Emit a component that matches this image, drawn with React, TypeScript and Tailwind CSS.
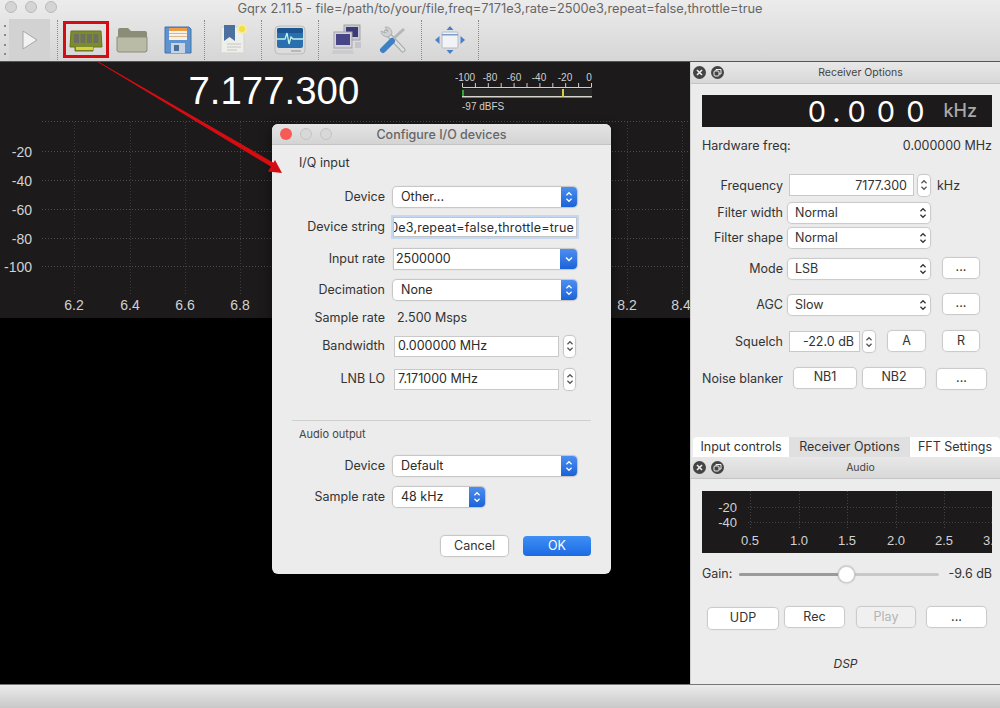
import React from 'react'

const SANS = 'font-["Inter","Liberation_Sans",sans-serif]'

function Stepper({ small }: { small?: boolean }) {
  return (
    <svg width="8" height={small ? 12 : 14} viewBox="0 0 8 14" fill="none" stroke="currentColor" strokeWidth="1.4">
      <path d="M1 5 L4 2 L7 5" />
      <path d="M1 9 L4 12 L7 9" />
    </svg>
  )
}

function BlueSelect({ value, className }: { value: string; className: string }) {
  return (
    <div className={`flex h-5 items-center rounded-[4px] bg-white pl-2 shadow-[0_0_1px_1px_#c4c4c4] ${className}`}>
      <span className="flex-1 truncate text-[#2b2b2b]">{value}</span>
      <span className="flex h-5 w-4 items-center justify-center rounded-r-[4px] bg-gradient-to-b from-[#4c8ff0] to-[#1a62d8] text-white">
        <Stepper small />
      </span>
    </div>
  )
}

function SpinBox({ value }: { value: string }) {
  return (
    <div className="ml-px flex items-center gap-[5px]">
      <div className="flex h-[21px] w-[165px] items-center border border-[#c9c9c9] bg-white pl-[3px] text-[#2b2b2b]">
        {value}
      </div>
      <span className="flex h-[21px] w-[11px] items-center justify-center rounded-[4px] bg-white text-[#555] shadow-[0_0_1px_1px_#c4c4c4]">
        <Stepper small />
      </span>
    </div>
  )
}

function DialogRow({ label, className, children }: { label: string; className: string; children: React.ReactNode }) {
  return (
    <div className={`flex h-5 items-center ${className}`}>
      <span className="w-[113px] text-right text-[#333]">{label}</span>
      <div className="ml-2">{children}</div>
    </div>
  )
}

function ConfigureDialog() {
  return (
    <div className={`absolute left-[272px] top-[124px] h-[450px] w-[339px] overflow-hidden rounded-[6px] bg-[#ececec] text-[12.5px] shadow-[0_4px_14px_rgba(0,0,0,0.45)] ${SANS}`}>
      <div className="relative flex h-[21px] items-center justify-center border-b border-[#c4c4c4] bg-gradient-to-b from-[#e4e4e4] to-[#d4d4d4] pt-[2px]">
        <div className="absolute left-[8px] top-[4px] flex gap-[8px]">
          <span className="h-3 w-3 rounded-full bg-[#f75b57]" />
          <span className="h-3 w-3 rounded-full border border-[#c4c4c4] bg-[#d8d8d8]" />
          <span className="h-3 w-3 rounded-full border border-[#c4c4c4] bg-[#d8d8d8]" />
        </div>
        <span className="text-[12.5px] font-medium text-[#666]">Configure I/O devices</span>
      </div>

      <div className="ml-[27px] mt-2 flex h-5 items-center text-[#333]">I/Q input</div>

      <DialogRow label="Device" className="mt-[14px]">
        <BlueSelect value="Other..." className="w-[184px]" />
      </DialogRow>
      <DialogRow label="Device string" className="mt-[10px]">
        <div className="relative h-5 w-[184px] overflow-hidden border border-[#c4c4c4] bg-white text-[#2b2b2b] shadow-[0_0_0_2px_#c5d8f2]">
          <span className="absolute right-[2px] top-[1px] whitespace-nowrap tracking-[0.2px]">0e3,repeat=false,throttle=true</span>
        </div>
      </DialogRow>
      <DialogRow label="Input rate" className="mt-[12px]">
        <div className="ml-px flex h-5 w-[183px] items-center rounded-r-[4px] bg-white pl-[2px] text-[#2b2b2b] shadow-[0_0_1px_1px_#c4c4c4]">
          <span className="flex-1">2500000</span>
          <span className="flex h-5 w-[17px] items-center justify-center rounded-r-[4px] bg-gradient-to-b from-[#4c8ff0] to-[#1a62d8] text-white">
            <svg width="8" height="6" viewBox="0 0 8 6" fill="none" stroke="currentColor" strokeWidth="1.4">
              <path d="M1 1.5 L4 4.5 L7 1.5" />
            </svg>
          </span>
        </div>
      </DialogRow>
      <DialogRow label="Decimation" className="mt-[11px]">
        <BlueSelect value="None" className="w-[184px]" />
      </DialogRow>
      <DialogRow label="Sample rate" className="mt-2">
        <span className="ml-1 text-[#333]">2.500 Msps</span>
      </DialogRow>
      <DialogRow label="Bandwidth" className="mt-2">
        <SpinBox value="0.000000 MHz" />
      </DialogRow>
      <DialogRow label="LNB LO" className="mt-[13px]">
        <SpinBox value="7.171000 MHz" />
      </DialogRow>

      <div className="mx-5 mt-[31px] h-px bg-[#cfcfcf]" />
      <div className="ml-[27px] mt-[3px] flex h-5 items-center text-[11px] text-[#444]">Audio output</div>

      <DialogRow label="Device" className="mt-3">
        <BlueSelect value="Default" className="w-[184px]" />
      </DialogRow>
      <DialogRow label="Sample rate" className="mt-[11px]">
        <BlueSelect value="48 kHz" className="w-[92px]" />
      </DialogRow>

      <div className="mr-[20px] mt-[29px] flex justify-end gap-[15px]">
        <span className="flex h-5 w-[67px] items-center justify-center rounded-[4px] bg-white text-[#333] shadow-[0_0_1px_1px_#c4c4c4]">
          Cancel
        </span>
        <span className="flex h-5 w-[68px] items-center justify-center rounded-[4px] bg-gradient-to-b from-[#3f8ff5] to-[#1b6ae4] text-white">
          OK
        </span>
      </div>
    </div>
  )
}

function ChipIcon() {
  return (
    <svg width="34" height="30" viewBox="0 0 34 30">
      <path d="M2 6 H32 L33 22 H24 V26 H6 V22 H1 Z" fill="#7d8c2a" stroke="#66741f" />
      <rect x="5" y="9" width="5" height="9" fill="#6c6f62" />
      <rect x="11.5" y="9" width="5" height="9" fill="#6c6f62" />
      <rect x="18" y="9" width="5" height="9" fill="#6c6f62" />
      <rect x="24.5" y="9" width="5" height="9" fill="#6c6f62" />
      <rect x="7" y="22" width="17" height="3" fill="#d8cf3c" />
    </svg>
  )
}

function FolderIcon() {
  return (
    <svg width="32" height="28" viewBox="0 0 32 28">
      <path d="M2 4 Q2 2 4 2 H12 L15 5 H29 Q31 5 31 7 V24 Q31 26 29 26 H4 Q2 26 2 24 Z" fill="#8b8d78" />
      <path d="M1 11 H31 V24 Q31 26 29 26 H3 Q1 26 1 24 Z" fill="#b9bba6" stroke="#8b8d78" />
    </svg>
  )
}

function FloppyIcon() {
  return (
    <svg width="30" height="30" viewBox="0 0 30 30">
      <path d="M2 2 H26 L28 4 V28 H2 Z" fill="#5f93cd" stroke="#3f72ad" />
      <rect x="6" y="3" width="18" height="12" fill="#f5f2ea" />
      <rect x="6" y="3" width="18" height="3" fill="#ee9d47" />
      <rect x="6" y="8" width="18" height="1" fill="#e3b489" />
      <rect x="6" y="11" width="18" height="1" fill="#e3b489" />
      <rect x="8" y="18" width="14" height="10" fill="#c7d3e0" />
      <rect x="11" y="20" width="5" height="6" fill="#4a6f98" />
    </svg>
  )
}

function BookmarkIcon() {
  return (
    <svg width="30" height="32" viewBox="0 0 30 32">
      <path d="M3 3 H26 V29 H3 Z" fill="#eeeeea" stroke="#d4d4cf" />
      <path d="M6 1 H17 V17 L11.5 13 L6 17 Z" fill="#4b709f" />
      <path d="M9 20 H23 M9 23 H23 M9 26 H19" stroke="#c4c4c0" />
      <circle cx="24" cy="5" r="5" fill="#f6ec9c" />
      <circle cx="24" cy="5" r="3" fill="#f2dc4a" />
    </svg>
  )
}

function MonitorIcon() {
  return (
    <svg width="32" height="30" viewBox="0 0 32 30">
      <rect x="1" y="1" width="30" height="28" rx="4" fill="#dcdcdc" stroke="#bcbcbc" />
      <rect x="3" y="3" width="26" height="20" rx="2" fill="#2a6fb0" />
      <rect x="3" y="3" width="26" height="5" rx="2" fill="#1d5590" />
      <path d="M3 14 H11 L13 8 L15 19 L17 12 L19 14 H29" stroke="#c4f4e4" strokeWidth="1.3" fill="none" />
      <rect x="17" y="25" width="10" height="2" fill="#b8b8b8" />
    </svg>
  )
}

function ComputersIcon() {
  return (
    <svg width="32" height="32" viewBox="0 0 32 32">
      <rect x="13" y="1" width="16" height="15" fill="#c9c9cf" stroke="#a2a2aa" />
      <rect x="15" y="3" width="12" height="10" fill="#3d3a78" />
      <rect x="3" y="8" width="18" height="16" fill="#d4d4d8" stroke="#a2a2aa" />
      <rect x="5" y="10" width="14" height="11" fill="#474488" />
      <path d="M2 26 H22 L23 30 H1 Z" fill="#cbcbd0" />
      <path d="M24 18 H30 V24 H24 Z" fill="#c4c4ca" />
    </svg>
  )
}

function ToolsIcon() {
  return (
    <svg width="28" height="28" viewBox="0 0 28 28" fill="none">
      {/* wrench, jaw top left */}
      <path d="M7 6 L24 24" stroke="#a4a8a8" strokeWidth="5" strokeLinecap="round" />
      <path d="M7 6 L24 24" stroke="#dfe1e1" strokeWidth="3" strokeLinecap="round" />
      <path d="M2 5 A6 6 0 0 0 11 10 L13 7 A6 6 0 0 0 6 1 L9 5 L6 7 Z" fill="#cfd2d2" stroke="#a0a4a4" strokeWidth="0.7" />
      {/* screwdriver */}
      <path d="M14 13 L25 3" stroke="#b4b8b8" strokeWidth="3" />
      <path d="M4 24 L13 15" stroke="#3f7fc4" strokeWidth="6" strokeLinecap="round" />
    </svg>
  )
}

function MoveIcon() {
  return (
    <svg width="30" height="28" viewBox="0 0 30 28">
      <rect x="7" y="6" width="16" height="16" rx="1" fill="#f1f3f6" stroke="#b4bcc8" />
      <rect x="7" y="8" width="16" height="1.5" fill="#7f9fca" />
      <path d="M15 0 L18.5 4 H11.5 Z M15 28 L11.5 24 H18.5 Z M0 14 L4.5 10 V18 Z M30 14 L25.5 18 V10 Z" fill="#4a80c4" />
    </svg>
  )
}

function Sep({ ml }: { ml: string }) {
  return <span className={`h-[40px] border-l border-dotted border-[#8a8a8a] ${ml}`} />
}

function ToolIcon({ w, children }: { w: string; children: React.ReactNode }) {
  return <span className={`flex h-[42px] items-center justify-center ${w}`}>{children}</span>
}

function TitleAndToolbar() {
  return (
    <div className="h-[62px] border-b border-[#555] bg-gradient-to-b from-[#ececec] to-[#d6d6d6]">
      <div className="relative flex h-[19px] items-center justify-center pb-[2px]">
        <div className="absolute left-[5px] top-[1px] flex gap-[8px]">
          <span className="h-3 w-3 rounded-full border border-[#bbb] bg-[#d4d4d4]" />
          <span className="h-3 w-3 rounded-full border border-[#bbb] bg-[#d4d4d4]" />
          <span className="h-3 w-3 rounded-full border border-[#bbb] bg-[#d4d4d4]" />
        </div>
        <span className={`text-[12.8px] text-[#666] ${SANS}`}>
          Gqrx 2.11.5 - file=/path/to/your/file,freq=7171e3,rate=2500e3,repeat=false,throttle=true
        </span>
      </div>
      <div className="flex h-[42px] items-center">
        <span className="ml-[4px] flex h-[30px] w-[2px] flex-col justify-between">
          <span className="h-[2px] w-[2px] bg-[#888]" />
          <span className="h-[2px] w-[2px] bg-[#888]" />
          <span className="h-[2px] w-[2px] bg-[#888]" />
          <span className="h-[2px] w-[2px] bg-[#888]" />
        </span>
        <span className="ml-[3px] flex h-[42px] w-[41px] items-center justify-center bg-[#d2d2d2]">
          <svg width="18" height="22" viewBox="0 0 18 22" fill="#f2f2f2" stroke="#a8a8a8">
            <path d="M2 2 L16 11 L2 20 Z" />
          </svg>
        </span>
        <Sep ml="ml-[7px]" />
        <ToolIcon w="ml-[5px] w-[46px]"><ChipIcon /></ToolIcon>
        <ToolIcon w="w-[46px]"><FolderIcon /></ToolIcon>
        <ToolIcon w="w-[46px]"><FloppyIcon /></ToolIcon>
        <Sep ml="ml-[3px]" />
        <ToolIcon w="ml-[5px] w-[46px]"><BookmarkIcon /></ToolIcon>
        <Sep ml="ml-[5px]" />
        <ToolIcon w="ml-[5px] w-[46px]"><MonitorIcon /></ToolIcon>
        <Sep ml="ml-[5px]" />
        <ToolIcon w="ml-[5px] w-[46px]"><ComputersIcon /></ToolIcon>
        <ToolIcon w="w-[46px]"><ToolsIcon /></ToolIcon>
        <Sep ml="ml-[5px]" />
        <ToolIcon w="ml-[5px] w-[46px]"><MoveIcon /></ToolIcon>
        <Sep ml="ml-[5px]" />
      </div>
    </div>
  )
}

const plotFont = { fontFamily: '"Liberation Sans", sans-serif' }

function SpectrumPlot() {
  const rows: [number, string][] = [
    [90, '-20'],
    [119, '-40'],
    [148, '-60'],
    [177, '-80'],
    [205, '-100'],
  ]
  // ticks from 7.0 to 8.0 sit behind the dialog, so only their grid lines are drawn
  const gridX = [74, 130, 185, 240, 296, 351, 407, 462, 517, 572, 627, 682]
  const cols: [number, string][] = [
    [74, '6.2'],
    [130, '6.4'],
    [185, '6.6'],
    [240, '6.8'],
    [627, '8.2'],
    [681, '8.4'],
  ]
  const meterTicks = Array.from({ length: 11 }, (_, i) => 462.5 + i * 12.9)
  return (
    <svg width="690" height="256" className="block" style={plotFont}>
      <rect width="690" height="256" fill="#1c1a1b" />
      {[60, ...rows.map((r) => r[0])].map((y) => (
        <line key={y} x1="42" x2="690" y1={y - 0.5} y2={y - 0.5} stroke="#4c4c4c" strokeDasharray="1 2" />
      ))}
      {gridX.map((x) => (
        <line key={x} x1={x + 0.5} x2={x + 0.5} y1="60" y2="232" stroke="#3c3c3c" strokeDasharray="1 2" />
      ))}
      {rows.map(([y, t]) => (
        <text key={t} x="32" y={y + 5} textAnchor="end" fontSize="14" fill="#d2d2d2">{t}</text>
      ))}
      {cols.map(([x, t]) => (
        <text key={t} x={x} y="248" textAnchor="middle" fontSize="14" fill="#d2d2d2">{t}</text>
      ))}
      <text x="188.5" y="42" fontSize="38.4" fill="#ffffff">7.177.300</text>
      {[['-100', 465], ['-80', 490], ['-60', 514], ['-40', 539], ['-20', 565], ['0', 589]].map(([t, x]) => (
        <text key={t} x={x} y="19" textAnchor="middle" fontSize="10" fill="#cfcfcf">{t}</text>
      ))}
      <line x1="462.5" x2="591.5" y1="25.5" y2="25.5" stroke="#cfcfcf" />
      {meterTicks.map((x) => (
        <line key={x} x1={x} x2={x} y1="21" y2="25" stroke="#cfcfcf" />
      ))}
      <rect x="462" y="27" width="130" height="7" fill="#2a2a28" />
      <rect x="462" y="34" width="130" height="1.5" fill="#d6d6cf" />
      <rect x="462" y="28" width="2" height="6" fill="#2ea82e" />
      <rect x="562" y="27" width="2" height="8" fill="#d8cf3c" />
      <text x="462" y="48" fontSize="10" fill="#cfcfcf">-97 dBFS</text>
    </svg>
  )
}

function PlainSelect({ value }: { value: string }) {
  return (
    <div className="flex h-5 w-[142px] items-center rounded-[4px] bg-white pl-[7px] pr-[3px] shadow-[0_0_1px_1px_#c8c8c8]">
      <span className="flex-1 text-[#333]">{value}</span>
      <span className="text-[#333]">
        <Stepper small />
      </span>
    </div>
  )
}

function PushButton({ label, w, muted, h = 'h-5' }: { label: string; w: string; muted?: boolean; h?: string }) {
  return (
    <span
      className={`flex items-center justify-center rounded-[4px] shadow-[0_0_1px_1px_#c8c8c8] ${h} ${w} ${
        muted ? 'bg-[#f0f0f0] text-[#b4b4b4]' : 'bg-white text-[#333]'
      }`}
    >
      {label}
    </span>
  )
}

function DockRow({
  label,
  className,
  labelClass = '',
  children,
}: {
  label: string
  className: string
  labelClass?: string
  children: React.ReactNode
}) {
  return (
    <div className={`flex items-center ${className}`}>
      <span className={`w-[92px] shrink-0 whitespace-nowrap text-right text-[#333] ${labelClass}`}>{label}</span>
      <div className="ml-[5px] flex items-center">{children}</div>
    </div>
  )
}

function DockHeader({ title }: { title: string }) {
  return (
    <div className="flex h-[22px] items-center border-b border-[#c4c4c4] bg-gradient-to-b from-[#e8e8e8] to-[#d8d8d8] pl-[2px]">
      <span className="flex h-[13px] w-[13px] items-center justify-center rounded-full bg-[#444]">
        <svg width="7" height="7" viewBox="0 0 7 7" stroke="#f0f0f0" strokeWidth="1.6">
          <path d="M1 1 L6 6 M6 1 L1 6" />
        </svg>
      </span>
      <span className="ml-[5px] flex h-[13px] w-[13px] items-center justify-center rounded-full bg-[#444]">
        <svg width="9" height="9" viewBox="0 0 9 9" fill="none" stroke="#f0f0f0">
          <rect x="1" y="3" width="5" height="5" rx="1" />
          <path d="M3 3 V1.5 H8 V6 H6" />
        </svg>
      </span>
      <span className="flex-1 pr-[3px] text-center text-[10.5px] text-[#444]">{title}</span>
    </div>
  )
}

function AudioPlot() {
  const xs: [number, string][] = [
    [48, '0.5'],
    [97, '1.0'],
    [145, '1.5'],
    [194, '2.0'],
    [242, '2.5'],
    [290, '3.0'],
  ]
  return (
    <svg width="290" height="62" className="ml-[11px] mt-[12px] block" style={plotFont}>
      <rect width="290" height="62" fill="#1c1a1b" />
      {[16, 31].map((y) => (
        <line key={y} x1="46" x2="290" y1={y + 0.5} y2={y + 0.5} stroke="#444" strokeDasharray="1 2" />
      ))}
      {xs.map(([x]) => (
        <line key={x} x1={x + 0.5} x2={x + 0.5} y1="0" y2="38" stroke="#444" strokeDasharray="1 2" />
      ))}
      <text x="35" y="21" textAnchor="end" fontSize="13" fill="#d2d2d2">-20</text>
      <text x="35" y="36" textAnchor="end" fontSize="13" fill="#d2d2d2">-40</text>
      {xs.map(([x, t]) => (
        <text key={t} x={x} y="54" textAnchor="middle" fontSize="13" fill="#d2d2d2">{t}</text>
      ))}
    </svg>
  )
}

function RightDock() {
  return (
    <div className={`flex h-full w-[310px] flex-col border-l border-[#cfcfcf] bg-[#ececec] text-[12.5px] ${SANS}`}>
      <DockHeader title="Receiver Options" />

      <div className="ml-[11px] mt-[11px] flex h-[32px] w-[290px] items-center justify-end bg-[#1c1a1b] pr-[15px]">
        <span className="text-[29px] leading-none tracking-[7px] text-white">0.</span>
        <span className="text-[29px] leading-none tracking-[11px] text-white">000</span>
        <span className="ml-[8px] text-[18px] font-medium leading-none text-[#a8a8a8]">kHz</span>
      </div>

      <div className="ml-[11px] mt-[9px] flex h-5 w-[290px] items-center justify-between text-[#333]">
        <span>Hardware freq:</span>
        <span>0.000000 MHz</span>
      </div>

      <DockRow label="Frequency" className="mt-[18px] h-[22px]" labelClass="pt-[2px]">
        <div className="ml-px flex h-[22px] w-[125px] items-center justify-end border border-[#c9c9c9] bg-white pr-[6px] pt-[2px] text-[#333]">
          7177.300
        </div>
        <span className="ml-[4px] flex h-[21px] w-[12px] items-center justify-center rounded-[4px] bg-white text-[#555] shadow-[0_0_1px_1px_#c8c8c8]">
          <Stepper small />
        </span>
        <span className="ml-[7px] pt-[2px] text-[#333]">kHz</span>
      </DockRow>
      <DockRow label="Filter width" className="mt-[7px] h-5">
        <PlainSelect value="Normal" />
      </DockRow>
      <DockRow label="Filter shape" className="mt-[5px] h-5">
        <PlainSelect value="Normal" />
      </DockRow>
      <DockRow label="Mode" className="mt-[11px] h-5">
        <PlainSelect value="LSB" />
        <span className="-mt-[3px] ml-[13px]"><PushButton label="..." w="w-[36px]" /></span>
      </DockRow>
      <DockRow label="AGC" className="mt-[16px] h-5">
        <PlainSelect value="Slow" />
        <span className="-mt-[3px] ml-[13px]"><PushButton label="..." w="w-[36px]" /></span>
      </DockRow>
      <DockRow label="Squelch" className="mt-[16px] h-[21px]" labelClass="pt-[2px]">
        <div className="ml-px flex h-[21px] w-[71px] items-center justify-end border border-[#c9c9c9] bg-white pr-[5px] pt-[2px] text-[#333]">
          -22.0 dB
        </div>
        <span className="ml-[3px] flex h-[21px] w-[12px] items-center justify-center rounded-[4px] bg-white text-[#555] shadow-[0_0_1px_1px_#c8c8c8]">
          <Stepper small />
        </span>
        <span className="-mt-px ml-[13px]"><PushButton label="A" w="w-[37px]" /></span>
        <span className="-mt-px ml-[18px]"><PushButton label="R" w="w-[36px]" /></span>
      </DockRow>
      <DockRow label="Noise blanker" className="mt-[16px] h-5" labelClass="pt-[2px]">
        <span className="ml-[6px] -mt-px"><PushButton label="NB1" w="w-[62px]" /></span>
        <span className="ml-[7px] -mt-px"><PushButton label="NB2" w="w-[62px]" /></span>
        <span className="ml-[12px] mt-[1px]"><PushButton label="..." w="w-[49px]" /></span>
      </DockRow>

      <div className="mt-auto flex h-[20px] text-[#333]">
        <span className="ml-[2px] flex w-[96px] items-center justify-center rounded-tl-[4px] bg-white">Input controls</span>
        <span className="flex w-[121px] items-center justify-center bg-[#e0e0e0]">Receiver Options</span>
        <span className="flex flex-1 items-center justify-center rounded-tr-[4px] bg-white">FFT Settings</span>
      </div>

      <DockHeader title="Audio" />
      <AudioPlot />

      <div className="ml-[11px] mt-[11px] flex h-5 w-[290px] items-center text-[#333]">
        <span>Gain:</span>
        <div className="relative ml-[7px] h-[3px] w-[200px] rounded-full bg-[#c8c8c8]">
          <div className="h-[3px] w-[108px] rounded-full bg-[#9a9a9a]" />
          <span className="absolute left-[99px] top-[-7px] h-[17px] w-[17px] rounded-full border border-[#d0d0d0] bg-white shadow-[0_0_2px_#999]" />
        </div>
        <span className="ml-auto">-9.6 dB</span>
      </div>

      <div className="ml-[17px] mt-[23px] flex items-start">
        <span className="mt-[1px]"><PushButton label="UDP" w="w-[70px]" h="h-[21px]" /></span>
        <span className="ml-[7px]"><PushButton label="Rec" w="w-[59px]" /></span>
        <span className="ml-[13px]"><PushButton label="Play" w="w-[58px]" muted /></span>
        <span className="ml-[12px]"><PushButton label="..." w="w-[59px]" /></span>
      </div>

      <div className="mb-[10px] mt-[25px] text-center text-[12px] italic leading-[20px] text-[#333]">DSP</div>
    </div>
  )
}

export default function App() {
  return (
    <div className="relative flex h-[708px] w-[1000px] flex-col overflow-hidden bg-black">
      <TitleAndToolbar />
      <div className="flex h-[622px]">
        <div className="w-[690px] bg-black">
          <SpectrumPlot />
        </div>
        <RightDock />
      </div>
      <div className="h-[24px] border-t border-[#777] bg-gradient-to-b from-[#ececec] to-[#c8c8c8]" />

      <ConfigureDialog />

      {/* annotation drawn on top of the screenshot */}
      <span className="absolute left-[63px] top-[21px] h-[37px] w-[46px] border-[3px] border-[#d40d12]" />
      <svg className="absolute left-0 top-0" width="300" height="200">
        <path d="M97.5 62 L99 62 L274 163 L271.5 167 Z" fill="#d40d12" />
        <path d="M282 173 L268 171.5 L275 160 Z" fill="#d40d12" />
      </svg>
    </div>
  )
}
